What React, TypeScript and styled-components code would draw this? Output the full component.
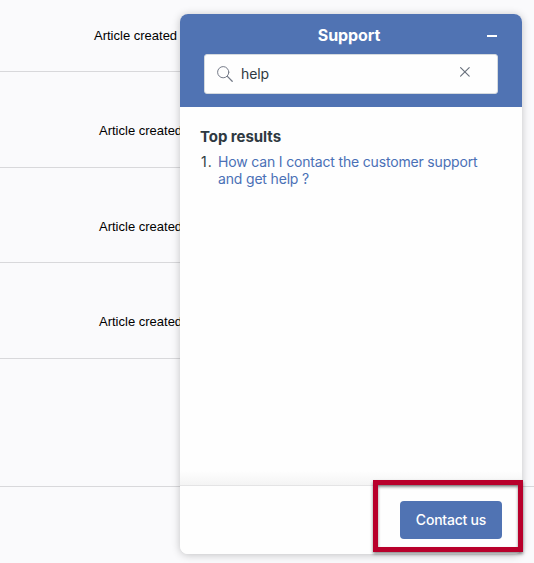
import React from "react";
import styled, { createGlobalStyle } from "styled-components";

const GlobalStyle = createGlobalStyle`
  *, *::before, *::after { box-sizing: border-box; }
  body {
    margin: 0;
    overflow: hidden;
    background: #fafafc;
    font-family: Inter, "Liberation Sans", sans-serif;
  }
`;

const Page = styled.div`
  position: relative;
  width: 534px;
  height: 563px;
  overflow: hidden;
`;

const Articles = styled.div`
  display: flex;
  flex-direction: column;
`;

const ArticleRow = styled.div<{ $height: number; $indent?: number; $top?: number }>`
  width: 480px;
  height: ${(p) => p.$height}px;
  padding: ${(p) => p.$top ?? 51}px 0 0 ${(p) => p.$indent ?? 99}px;
  border-bottom: 1px solid #d8d8db;
  color: #000;
  font: 13px/16px "Liberation Sans", Arial, sans-serif;
  white-space: nowrap;
`;

const PageDivider = styled.div`
  height: 128px;
  border-bottom: 1px solid #d8d8db;
`;

const Widget = styled.section`
  position: absolute;
  left: 180px;
  top: 14px;
  width: 342px;
  height: 540px;
  display: flex;
  flex-direction: column;
  overflow: hidden;
  border-radius: 8px;
  background: #fefefe;
  box-shadow: 0 1px 8px rgba(0, 0, 0, 0.23);
`;

const Header = styled.header`
  height: 93px;
  flex: none;
  padding: 0 24px;
  background: #5073b3;
`;

const TitleBar = styled.div`
  display: grid;
  grid-template-columns: 1fr auto 1fr;
  align-items: center;
  height: 40px;
  padding-top: 4px;
`;

const Title = styled.h1`
  grid-column: 2;
  margin: 0;
  padding: 0 4px 2px 0;
  color: #fff;
  font-size: 16px;
  font-weight: 700;
  line-height: 20px;
  letter-spacing: -0.1px;
`;

const MinimizeButton = styled.button`
  justify-self: end;
  display: flex;
  padding: 0;
  border: 0;
  background: none;
`;

const SearchBox = styled.label`
  display: flex;
  align-items: center;
  height: 40px;
  padding: 0 26px 0 12px;
  border: 1px solid #d5dade;
  border-radius: 3px;
  background: #fefefe;
`;

const SearchInput = styled.input`
  flex: 1;
  min-width: 0;
  height: 30px;
  margin-left: 8px;
  padding: 0 0 2px;
  border: 0;
  outline: 0;
  background: transparent;
  color: #2f3941;
  font: 14px Inter, sans-serif;
  letter-spacing: -0.15px;
`;

const ClearIcon = styled.svg`
  margin-bottom: 5px;
`;

const Results = styled.main`
  flex: 1;
  padding: 20px;
  background: linear-gradient(to top, #f4f4f4, #fefefe 14px);
`;

const ResultsTitle = styled.h2`
  margin: 0;
  color: #2f3941;
  font-size: 15px;
  font-weight: 700;
  line-height: 20px;
  letter-spacing: -0.05px;
`;

const ResultList = styled.ol`
  margin: 6px 0 0;
  padding: 0;
  list-style: none;
  font-size: 14px;
  line-height: 17px;
`;

const Result = styled.li`
  display: flex;
`;

const Ordinal = styled.span`
  width: 18px;
  flex: none;
  padding-left: 1px;
  color: #2f3941;
  letter-spacing: 1px;
`;

const ResultLink = styled.a`
  color: #4a70b6;
  letter-spacing: -0.17px;
`;

const Footer = styled.footer`
  display: flex;
  justify-content: flex-end;
  height: 69px;
  flex: none;
  padding: 15px 20px 0;
  border-top: 1px solid #e4e4e5;
  background: #fefefe;
`;

const ContactButton = styled.button`
  width: 102px;
  height: 38px;
  padding: 0 0 2px;
  border: 0;
  border-radius: 4px;
  background: #5073b3;
  color: #fff;
  font: 500 14px Inter, sans-serif;
  letter-spacing: -0.22px;
`;

const Highlight = styled.div`
  position: absolute;
  left: 373px;
  top: 480px;
  width: 150px;
  height: 72px;
  border: 5px solid #b8002b;
  box-shadow: 0 2px 3px rgba(0, 0, 0, 0.45), inset 0 2px 3px rgba(0, 0, 0, 0.45);
`;

const rows = [
  { height: 72, indent: 94, top: 28 },
  { height: 96 },
  { height: 95 },
  { height: 96 },
];

export default function App() {
  return (
    <Page>
      <GlobalStyle />
      <Articles>
        {rows.map((row, i) => (
          <ArticleRow key={i} $height={row.height} $indent={row.indent} $top={row.top}>
            Article created
          </ArticleRow>
        ))}
        <PageDivider />
      </Articles>
      <Widget>
        <Header>
          <TitleBar>
            <Title>Support</Title>
            <MinimizeButton aria-label="Minimize">
              <svg width="12" height="12" viewBox="0 0 12 12" stroke="#fff" strokeWidth="2">
                <path d="M1 6h10" />
              </svg>
            </MinimizeButton>
          </TitleBar>
          <SearchBox>
            <svg width="16" height="16" viewBox="0 0 16 16" fill="none" stroke="#757b88" strokeLinecap="round">
              <circle cx="6.2" cy="6.2" r="5.6" />
              <path d="M10.4 10.4l4.8 4.8" strokeWidth="1.3" />
            </svg>
            <SearchInput aria-label="Search" defaultValue="help" />
            <ClearIcon width="12" height="12" viewBox="0 0 12 12" stroke="#68707c" strokeLinecap="round" strokeWidth="1.15">
              <path d="M1.6 1.6l8.6 8.6M10.2 1.6l-8.6 8.6" />
            </ClearIcon>
          </SearchBox>
        </Header>
        <Results>
          <ResultsTitle>Top results</ResultsTitle>
          <ResultList>
            <Result>
              <Ordinal>1.</Ordinal>
              <ResultLink>
                How can I contact the customer support
                <br />
                and get help ?
              </ResultLink>
            </Result>
          </ResultList>
        </Results>
        <Footer>
          <ContactButton>Contact us</ContactButton>
        </Footer>
      </Widget>
      <Highlight />
    </Page>
  );
}
